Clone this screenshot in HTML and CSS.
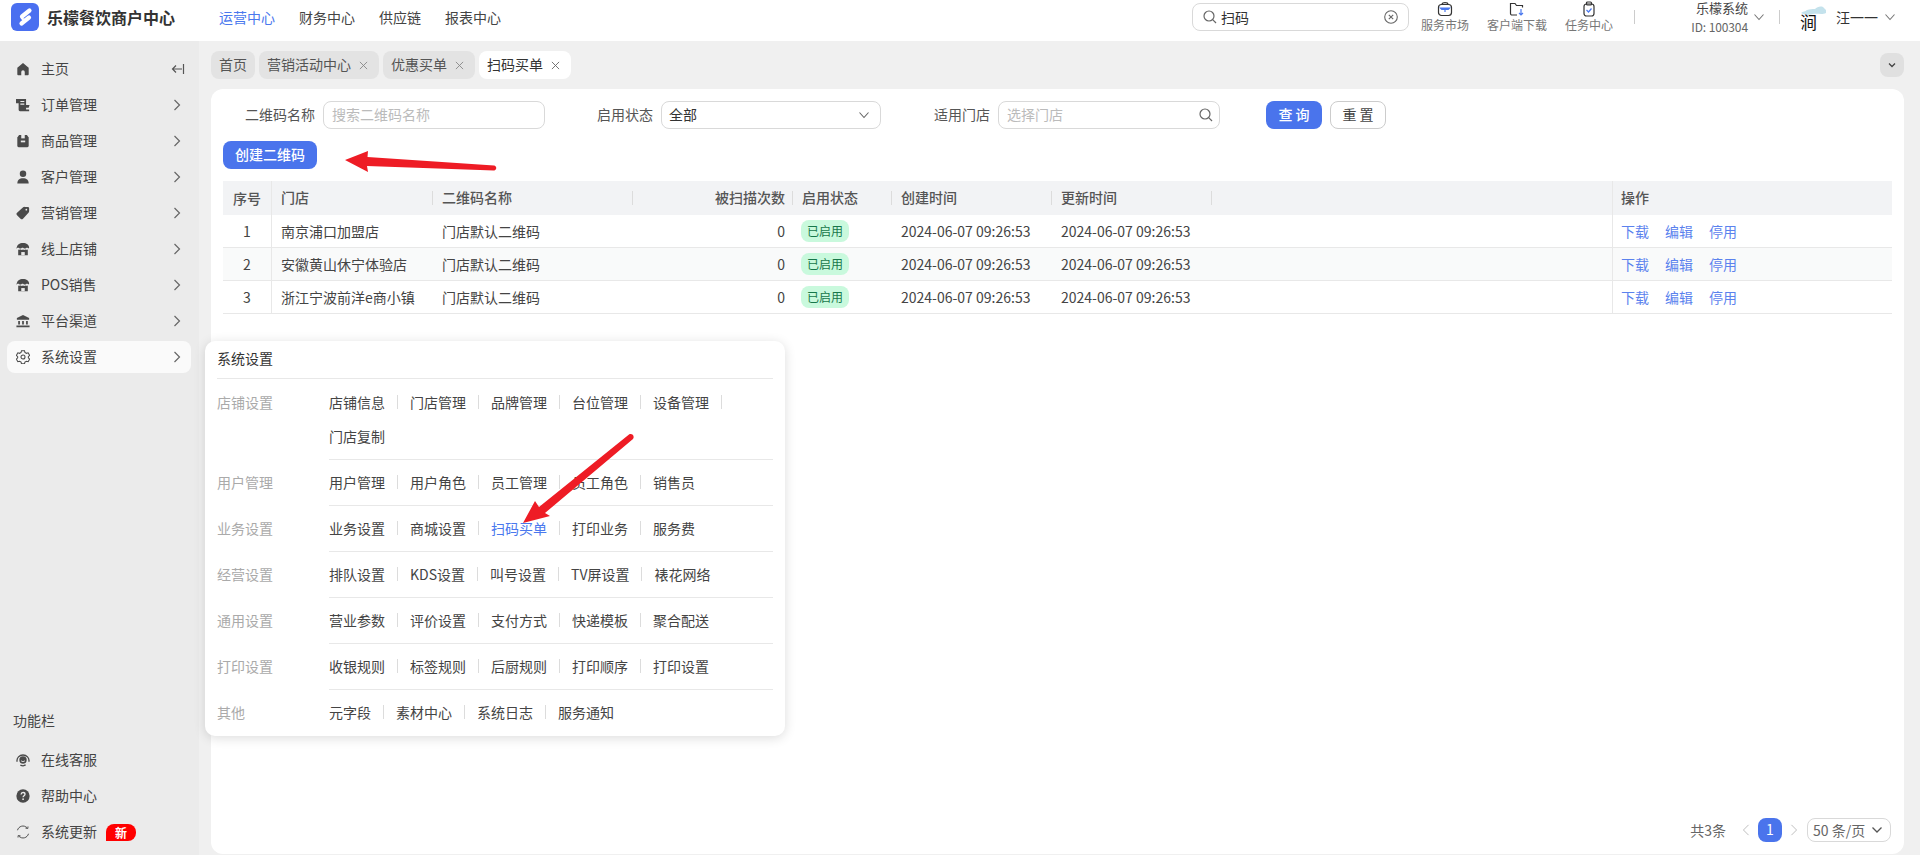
FILE: index.html
```html
<!DOCTYPE html>
<html lang="zh">
<head>
<meta charset="utf-8">
<title>乐檬餐饮商户中心</title>
<link rel="stylesheet" href="styles.css">
</head>
<body>
<header class="topbar">
  <div class="brand">
    <svg class="logo" viewBox="0 0 28 28"><rect width="28" height="28" rx="6" fill="#4a6ff0"/><path d="M18.500 7.500 11 13.500" fill="none" stroke="#fff" stroke-width="4.200" stroke-linecap="round"/><path d="M18 14.500 10.500 20.500" fill="none" stroke="#fff" stroke-width="4.200" stroke-linecap="round"/><path d="M11 13.500c-1.500 1.500.5 3 2.500 3" fill="none" stroke="#fff" stroke-width="2"/></svg>
    <span class="brand-name">乐檬餐饮商户中心</span>
  </div>
  <nav class="topnav">
    <a class="topnav-item is-active">运营中心</a>
    <a class="topnav-item">财务中心</a>
    <a class="topnav-item">供应链</a>
    <a class="topnav-item">报表中心</a>
  </nav>
  <div class="top-right">
    <div class="search">
      <svg class="ico16" viewBox="0 0 16 16" fill="none" stroke="#666" stroke-width="1.200"><circle cx="7" cy="7" r="5"/><path d="m10.700 10.700 3.300 3.300"/></svg>
      <span class="search-text">扫码</span>
      <svg class="ico16" viewBox="0 0 16 16" fill="none" stroke="#666" stroke-width="1.100"><circle cx="8" cy="8" r="6.300"/><path d="m5.800 5.800 4.400 4.400m0-4.400-4.400 4.400"/></svg>
    </div>
    <div class="tool tool-a">
      <svg class="tool-ico" viewBox="0 0 16 16" fill="none" stroke="#333" stroke-width="1.200"><rect x="1.500" y="3.500" width="13" height="11" rx="3"/><path d="M5 3.500c0-2.500 6-2.500 6 0"/><path d="M2 6.500h12L11.500 9h-7z" fill="#4a78ee" stroke="none"/><path d="M8 9v2" stroke="#4a78ee"/></svg>
      <span>服务市场</span>
    </div>
    <div class="tool tool-b">
      <svg class="tool-ico" viewBox="0 0 16 16" fill="none" stroke="#333" stroke-width="1.200"><path d="M13.500 6.500V4.500h-6L6 2.500H1.500v10a1.500 1.500 0 0 0 1.500 1.500h5"/><path d="M12 8v6m-2-2 2 2 2-2" stroke="#4a78ee"/></svg>
      <span>客户端下载</span>
    </div>
    <div class="tool tool-c">
      <svg class="tool-ico" viewBox="0 0 16 16" fill="none" stroke="#333" stroke-width="1.200"><rect x="3" y="3" width="10" height="12" rx="2.500"/><rect x="5.500" y="1" width="5" height="3" rx="1"/><path d="m5.500 9 2 2 3-3.500" stroke="#4a78ee"/></svg>
      <span>任务中心</span>
    </div>
    <i class="vsep vsep-a"></i>
    <div class="org">
      <span class="org-name">乐檬系统</span>
      <span class="org-id">ID: 100304</span>
    </div>
    <svg class="chev-down org-chev" viewBox="0 0 12 12" fill="none" stroke="#777" stroke-width="1.100"><path d="m1.500 3.500 4.500 5 4.500-5"/></svg>
    <i class="vsep vsep-b"></i>
    <div class="avatar">
      <svg class="avatar-cloud" viewBox="0 0 32 32"><path d="M5 12c2-2 4-1 6-3 3-1 5-1 8-1 2-2 5-3 8-2l3 3v3c-4 2-9 0-13 1-4 1-8 1-12-1Z" fill="#c4e2ec"/></svg>
      <span class="avatar-char">涧</span>
    </div>
    <span class="user-name">汪一一</span>
    <svg class="chev-down user-chev" viewBox="0 0 12 12" fill="none" stroke="#777" stroke-width="1.100"><path d="m1.500 3.500 4.500 5 4.500-5"/></svg>
  </div>
</header>

<div class="main">
  <aside class="sidebar">
    <ul class="menu">
      <li class="menu-item">
        <svg class="menu-ico" viewBox="0 0 16 16"><path d="M8 1 1.500 6.500V14a1 1 0 0 0 1 1H6v-3.500a2 2 0 0 1 4 0V15h3.500a1 1 0 0 0 1-1V6.500Z" fill="#4a4a4a"/></svg>
        <span class="menu-text">主页</span>
        <svg class="collapse" viewBox="0 0 14 14" fill="none" stroke="#555" stroke-width="1.200"><path d="M11 7H1.500m3.500-3.500L1.500 7 5 10.500M12.500 2v10"/></svg>
      </li>
      <li class="menu-item">
        <svg class="menu-ico" viewBox="0 0 16 16"><path d="M0 1h11.500v7H15.500l-1 3H11.500v2l3.500 0v2H4.500A1.500 1.500 0 0 1 3 13.500V6H0Z" fill="#4a4a4a"/><path d="M5 4h4.500M5 7h4.500" stroke="#ebebeb" stroke-width="1.300"/></svg>
        <span class="menu-text">订单管理</span>
        <svg class="chev" viewBox="0 0 8 12" fill="none" stroke="#666" stroke-width="1.200"><path d="m1.500 1 5 5-5 5"/></svg>
      </li>
      <li class="menu-item">
        <svg class="menu-ico" viewBox="0 0 16 16"><path d="M1.500 4 3.500 1h9l2 3v9.500a1.500 1.500 0 0 1-1.500 1.500H3a1.500 1.500 0 0 1-1.500-1.500Z" fill="#4a4a4a"/><path d="M5.500 7.500h5v2h-5Z" fill="#ebebeb"/><path d="M6 1v4h4V1" fill="#ebebeb"/></svg>
        <span class="menu-text">商品管理</span>
        <svg class="chev" viewBox="0 0 8 12" fill="none" stroke="#666" stroke-width="1.200"><path d="m1.500 1 5 5-5 5"/></svg>
      </li>
      <li class="menu-item">
        <svg class="menu-ico" viewBox="0 0 16 16"><circle cx="8" cy="4.200" r="3.700" fill="#4a4a4a"/><path d="M1.500 15.500c0-4 2.500-6 6.500-6s6.500 2 6.500 6Z" fill="#4a4a4a"/></svg>
        <span class="menu-text">客户管理</span>
        <svg class="chev" viewBox="0 0 8 12" fill="none" stroke="#666" stroke-width="1.200"><path d="m1.500 1 5 5-5 5"/></svg>
      </li>
      <li class="menu-item">
        <svg class="menu-ico" viewBox="0 0 16 16"><path d="M10 1h3.500A1.500 1.500 0 0 1 15 2.500V6a3 3 0 0 1-1 2l-6 6.500a2 2 0 0 1-2.800 0l-4-4a2 2 0 0 1 0-2.800L7.500 2a3.500 3.500 0 0 1 2.500-1Z" fill="#4a4a4a"/><circle cx="11.800" cy="4.200" r="1" fill="#ebebeb"/></svg>
        <span class="menu-text">营销管理</span>
        <svg class="chev" viewBox="0 0 8 12" fill="none" stroke="#666" stroke-width="1.200"><path d="m1.500 1 5 5-5 5"/></svg>
      </li>
      <li class="menu-item">
        <svg class="menu-ico" viewBox="0 0 16 16"><path d="M1 6.500C1 3 4 1 8 1s7 2 7 5.500c0 .5-.4.800-1 .5-1-.6-1.800-.6-2.700 0-1 .6-1.500.5-2.500 0s-1.700-.5-2.700 0-1.500.6-2.300 0c-1-.6-2-.6-2.800 0-.6.300-1 0-1-.5Z" fill="#4a4a4a"/><path d="M2.500 8.500c1 .5 2.500 0 2.800 0 1 .8 2 .6 2.700 0 1 .8 2 .6 2.700 0 .6.300 1.800.5 2.800 0V15H2.500Z" fill="#4a4a4a"/><path d="M6 15v-3.500h4V15Z" fill="#ebebeb"/></svg>
        <span class="menu-text">线上店铺</span>
        <svg class="chev" viewBox="0 0 8 12" fill="none" stroke="#666" stroke-width="1.200"><path d="m1.500 1 5 5-5 5"/></svg>
      </li>
      <li class="menu-item">
        <svg class="menu-ico" viewBox="0 0 16 16"><path d="M1 6.500C1 3 4 1 8 1s7 2 7 5.500c0 .5-.4.800-1 .5-1-.6-1.800-.6-2.700 0-1 .6-1.500.5-2.500 0s-1.700-.5-2.700 0-1.500.6-2.300 0c-1-.6-2-.6-2.800 0-.6.300-1 0-1-.5Z" fill="#4a4a4a"/><path d="M2.500 8.500c1 .5 2.500 0 2.800 0 1 .8 2 .6 2.700 0 1 .8 2 .6 2.700 0 .6.300 1.800.5 2.800 0V15H2.500Z" fill="#4a4a4a"/><path d="M6 15v-3.500h4V15Z" fill="#ebebeb"/></svg>
        <span class="menu-text">POS销售</span>
        <svg class="chev" viewBox="0 0 8 12" fill="none" stroke="#666" stroke-width="1.200"><path d="m1.500 1 5 5-5 5"/></svg>
      </li>
      <li class="menu-item">
        <svg class="menu-ico" viewBox="0 0 16 16"><path d="M8 1 1 4.500v2h14v-2Z" fill="#4a4a4a"/><path d="M2.500 8h2v4h-2ZM7 8h2v4H7ZM11.500 8h2v4h-2ZM.5 13h15v2H.5Z" fill="#4a4a4a"/></svg>
        <span class="menu-text">平台渠道</span>
        <svg class="chev" viewBox="0 0 8 12" fill="none" stroke="#666" stroke-width="1.200"><path d="m1.500 1 5 5-5 5"/></svg>
      </li>
      <li class="menu-item is-open">
        <svg class="menu-ico" viewBox="0 0 16 16" fill="none" stroke="#4a4a4a" stroke-width="1.200"><path d="M6.300 1h3.400l.5 2 1.700 1 2-.6 1.700 3-1.500 1.400v1.400l1.500 1.400-1.700 3-2-.6-1.700 1-.5 2H6.300l-.5-2-1.700-1-2 .6-1.700-3 1.500-1.400V7.800L.4 6.400l1.700-3 2 .6 1.700-1Z" transform="translate(0 -.2)"/><circle cx="8" cy="8" r="2.300"/></svg>
        <span class="menu-text">系统设置</span>
        <svg class="chev" viewBox="0 0 8 12" fill="none" stroke="#666" stroke-width="1.200"><path d="m1.500 1 5 5-5 5"/></svg>
      </li>
    </ul>
    <div class="side-foot">
      <div class="foot-title">功能栏</div>
      <div class="menu-item">
        <svg class="menu-ico" viewBox="0 0 16 16" fill="none" stroke="#4a4a4a"><circle cx="8" cy="8" r="4.200" fill="#4a4a4a" stroke="none"/><path d="M5.800 8.800c1 1.300 3.400 1.300 4.400 0" stroke="#ebebeb" stroke-width="1"/><path d="M1.200 10C.5 5.500 4 2.300 8 2.300s7.500 3.200 6.800 7.700M5 13.800c2 1 4.500 1 6-.3" stroke-width="1.500"/></svg>
        <span class="menu-text">在线客服</span>
      </div>
      <div class="menu-item">
        <svg class="menu-ico" viewBox="0 0 16 16"><circle cx="8" cy="8" r="7.600" fill="#4a4a4a"/><path d="M5.800 6.200C5.900 4.800 6.800 4 8.100 4c1.300 0 2.200.8 2.200 2 0 1.800-2.200 1.800-2.200 3.500" fill="none" stroke="#ebebeb" stroke-width="1.500"/><circle cx="8.100" cy="11.600" r="1" fill="#ebebeb"/></svg>
        <span class="menu-text">帮助中心</span>
      </div>
      <div class="menu-item">
        <svg class="menu-ico" viewBox="0 0 16 16" fill="none" stroke="#4a4a4a" stroke-width="1.100"><path d="M1.700 6A6.500 6.500 0 0 1 12.500 3M14.300 10A6.500 6.500 0 0 1 3.500 13"/><path d="m10.800 3.500 2.700.5.200-2.300M5.200 12.500l-2.700-.5-.2 2.300"/></svg>
        <span class="menu-text">系统更新</span>
        <span class="badge-new">新</span>
      </div>
    </div>
  </aside>

  <section class="content">
    <div class="tabs">
      <div class="tab"><span>首页</span></div>
      <div class="tab"><span>营销活动中心</span><svg class="tab-x" viewBox="0 0 10 10" fill="none" stroke="#888" stroke-width="1"><path d="m1 1 8 8m0-8-8 8"/></svg></div>
      <div class="tab"><span>优惠买单</span><svg class="tab-x" viewBox="0 0 10 10" fill="none" stroke="#888" stroke-width="1"><path d="m1 1 8 8m0-8-8 8"/></svg></div>
      <div class="tab is-current"><span>扫码买单</span><svg class="tab-x" viewBox="0 0 10 10" fill="none" stroke="#666" stroke-width="1"><path d="m1 1 8 8m0-8-8 8"/></svg></div>
      <div class="tab-more"><svg viewBox="0 0 10 10" fill="none" stroke="#444" stroke-width="1.300"><path d="m2 3.500 3 3 3-3"/></svg></div>
    </div>

    <div class="card">
      <form class="filters">
        <label class="f-label f-l1">二维码名称</label>
        <div class="field f-w1"><span class="ph">搜索二维码名称</span></div>
        <label class="f-label f-l2">启用状态</label>
        <div class="field f-w2"><span class="val">全部</span><svg class="field-chev" viewBox="0 0 12 12" fill="none" stroke="#666" stroke-width="1.100"><path d="m1.500 3.500 4.500 5 4.500-5"/></svg></div>
        <label class="f-label f-l3">适用门店</label>
        <div class="field f-w3"><span class="ph">选择门店</span><svg class="ico16 field-search" viewBox="0 0 16 16" fill="none" stroke="#666" stroke-width="1.200"><circle cx="7" cy="7" r="5"/><path d="m10.700 10.700 3.300 3.300"/></svg></div>
        <button type="button" class="btn btn-primary btn-query">查 询</button>
        <button type="button" class="btn btn-plain">重 置</button>
      </form>

      <button type="button" class="btn btn-primary btn-create">创建二维码</button>

      <table class="grid">
        <colgroup>
          <col class="c1"><col class="c2"><col class="c3"><col class="c4"><col class="c5"><col class="c6"><col class="c7"><col class="c8"><col class="c9">
        </colgroup>
        <thead>
          <tr>
            <th class="center">序号</th><th class="sep">门店</th><th class="sep">二维码名称</th><th class="right sep">被扫描次数</th><th class="sep">启用状态</th><th class="sep">创建时间</th><th class="sep">更新时间</th><th></th><th class="ops">操作</th>
          </tr>
        </thead>
        <tbody>
          <tr>
            <td class="center bar">1</td><td>南京浦口加盟店</td><td>门店默认二维码</td><td class="right">0</td><td><span class="tag">已启用</span></td><td>2024-06-07 09:26:53</td><td>2024-06-07 09:26:53</td><td></td><td class="ops"><a>下载</a><a>编辑</a><a>停用</a></td>
          </tr>
          <tr class="alt">
            <td class="center bar">2</td><td>安徽黄山休宁体验店</td><td>门店默认二维码</td><td class="right">0</td><td><span class="tag">已启用</span></td><td>2024-06-07 09:26:53</td><td>2024-06-07 09:26:53</td><td></td><td class="ops"><a>下载</a><a>编辑</a><a>停用</a></td>
          </tr>
          <tr>
            <td class="center bar">3</td><td>浙江宁波前洋e商小镇</td><td>门店默认二维码</td><td class="right">0</td><td><span class="tag">已启用</span></td><td>2024-06-07 09:26:53</td><td>2024-06-07 09:26:53</td><td></td><td class="ops"><a>下载</a><a>编辑</a><a>停用</a></td>
          </tr>
        </tbody>
      </table>

      <div class="pager">
        <span class="pager-total">共3条</span>
        <svg class="pager-arrow" viewBox="0 0 8 14" fill="none" stroke="#bbb" stroke-width="1.100"><path d="M7 1 1 7l6 6"/></svg>
        <span class="pager-num">1</span>
        <svg class="pager-arrow" viewBox="0 0 8 14" fill="none" stroke="#bbb" stroke-width="1.100"><path d="m1 1 6 6-6 6"/></svg>
        <div class="pager-size">50 条/页<svg class="pager-chev" viewBox="0 0 12 12" fill="none" stroke="#555" stroke-width="1.300"><path d="m1.500 3.500 4.500 4.500 4.500-4.500"/></svg></div>
      </div>
    </div>
  </section>
</div>

<div class="flyout">
  <div class="fly-title">系统设置</div>
  <div class="fly-group">
    <div class="fly-label">店铺设置</div>
    <div class="fly-links"><a>店铺信息</a><a>门店管理</a><a>品牌管理</a><a>台位管理</a><a>设备管理</a><a class="last">门店复制</a></div>
  </div>
  <div class="fly-group">
    <div class="fly-label">用户管理</div>
    <div class="fly-links"><a>用户管理</a><a>用户角色</a><a>员工管理</a><a>员工角色</a><a class="last">销售员</a></div>
  </div>
  <div class="fly-group">
    <div class="fly-label">业务设置</div>
    <div class="fly-links"><a>业务设置</a><a>商城设置</a><a class="is-on">扫码买单</a><a>打印业务</a><a class="last">服务费</a></div>
  </div>
  <div class="fly-group">
    <div class="fly-label">经营设置</div>
    <div class="fly-links"><a>排队设置</a><a>KDS设置</a><a>叫号设置</a><a>TV屏设置</a><a class="last">裱花网络</a></div>
  </div>
  <div class="fly-group">
    <div class="fly-label">通用设置</div>
    <div class="fly-links"><a>营业参数</a><a>评价设置</a><a>支付方式</a><a>快递模板</a><a class="last">聚合配送</a></div>
  </div>
  <div class="fly-group">
    <div class="fly-label">打印设置</div>
    <div class="fly-links"><a>收银规则</a><a>标签规则</a><a>后厨规则</a><a>打印顺序</a><a class="last">打印设置</a></div>
  </div>
  <div class="fly-group no-line">
    <div class="fly-label">其他</div>
    <div class="fly-links"><a>元字段</a><a>素材中心</a><a>系统日志</a><a class="last">服务通知</a></div>
  </div>
</div>

<svg class="annot" viewBox="0 0 1920 855">
  <path d="M345 160 368 151 367.500 157 494 165.500C497 166 497 170 494 170.500L367 166 368 172Z" fill="#ee1c25"/>
  <path d="M523 523 535 501 539 507 629 434.500C632 433 635 436 633 439L545 513 550 516Z" fill="#ee1c25"/>
</svg>
</body>
</html>
```
FILE: styles.css
```css
* { box-sizing: border-box; }
html, body { margin: 0; padding: 0; height: 100%; }
body {
  width: 1920px; height: 855px; overflow: hidden; position: relative;
  font-family: "Noto Sans CJK SC", "Noto Sans", sans-serif;
  font-size: 14px; color: #444; background: #f0f0f0;
  display: flex; flex-direction: column;
}
a { text-decoration: none; }
svg { display: block; flex: none; }

.topbar { height: 41px; flex: none; background: #fff; display: flex; align-items: center; padding: 0 0 7px 11px; }
.brand { display: flex; align-items: center; width: 208px; }
.logo { width: 28px; height: 28px; margin-right: 8px; }
.brand-name { font-size: 16px; font-weight: 700; color: #333; white-space: nowrap; }
.topnav { display: flex; gap: 24px; }
.topnav-item { font-size: 14px; color: #444; line-height: 20px; }
.topnav-item.is-active { color: #4a78ee; }
.top-right { margin-left: auto; display: flex; align-items: center; padding-right: 24px; }
.search { width: 217px; height: 28px; border: 1px solid #d9d9d9; border-radius: 8px; display: flex; align-items: center; padding: 0 9px; gap: 3px; }
.search-text { flex: 1; font-size: 14px; color: #333; }
.ico16 { width: 16px; height: 16px; }
.tool { display: flex; flex-direction: column; align-items: center; font-size: 12px; line-height: 16px; color: #777; white-space: nowrap; }
.tool-ico { width: 16px; height: 16px; }
.tool-a { margin-left: 12px; }
.tool-b { margin-left: 18px; }
.tool-c { margin-left: 18px; }
.vsep { display: block; width: 1px; height: 14px; background: #ccc; }
.vsep-a { margin-left: 21px; }
.org { width: 113px; display: flex; flex-direction: column; align-items: flex-end; }
.org-name { display: block; font-size: 13px; line-height: 18px; color: #444; }
.org-id { display: block; font-size: 12px; line-height: 18px; color: #666; margin-top: 1px; letter-spacing: -.1px; }
.chev-down { width: 12px; height: 12px; }
.org-chev { margin-left: 5px; }
.vsep-b { margin-left: 14px; }
.avatar { position: relative; width: 32px; height: 32px; margin-left: 16px; border-radius: 50%; background: #fff; overflow: hidden; text-align: center; }
.avatar-cloud { position: absolute; inset: 0; width: 32px; height: 32px; }
.avatar-char { position: relative; display: block; font-size: 17px; font-weight: 400; line-height: 32px; color: #111; padding: 5px 7px 0 0; }
.user-name { margin-left: 8px; font-size: 14px; color: #333; }
.user-chev { margin-left: 6px; }

.main { flex: 1; display: flex; min-height: 0; }

.sidebar { width: 199px; flex: none; background: #ebebeb; padding: 12px 8px 7px 7px; display: flex; flex-direction: column; justify-content: space-between; }
.menu { list-style: none; margin: 0; padding: 0; display: flex; flex-direction: column; gap: 4px; }
.menu-item { height: 32px; border-radius: 8px; display: flex; align-items: center; padding-left: 9px; color: #444; font-size: 14px; }
.menu-item.is-open { background: #fafafa; }
.menu-ico { width: 14px; height: 14px; }
.menu-text { margin-left: 11px; margin-bottom: 2px; flex: none; }
.chev { width: 8px; height: 12px; margin-left: auto; margin-right: 10px; }
.collapse { width: 14px; height: 14px; margin-left: auto; margin-right: 6px; }
.side-foot { display: flex; flex-direction: column; gap: 4px; }
.foot-title { padding-left: 6px; line-height: 20px; margin-bottom: 10px; color: #444; }
.badge-new { margin-left: 9px; width: 30px; height: 17px; background: #f00; color: #fff; font-size: 12px; line-height: 17px; text-align: center; font-weight: 700; border-radius: 8px 8px 8px 0; }

.content { flex: 1; min-width: 0; padding: 10px 16px 1px 12px; display: flex; flex-direction: column; }
.tabs { height: 28px; flex: none; margin-bottom: 10px; display: flex; align-items: center; gap: 4px; }
.tab { height: 28px; padding: 0 8px; background: #e3e3e3; border-radius: 8px; display: flex; align-items: center; gap: 8px; font-size: 14px; color: #555; white-space: nowrap; }
.tab span { margin-bottom: 2px; }
.tab.is-current { background: #fff; color: #333; }
.tab-x { width: 9px; height: 9px; margin-right: 3px; }
.tab-more { margin-left: auto; width: 24px; height: 24px; background: #e0e0e0; border-radius: 8px; display: flex; align-items: center; justify-content: center; }
.tab-more svg { width: 10px; height: 10px; }

.card { flex: 1; position: relative; background: #fff; border-radius: 12px; padding: 12px 12px 0; display: flex; flex-direction: column; }
.filters { height: 28px; flex: none; display: flex; align-items: center; }
.f-label { color: #555; font-size: 14px; white-space: nowrap; text-align: right; padding-bottom: 2px; }
.f-l1 { width: 92px; margin-right: 8px; }
.f-l2 { width: 57px; margin-left: 51px; margin-right: 8px; }
.f-l3 { width: 57px; margin-left: 52px; margin-right: 8px; }
.field { height: 28px; border: 1px solid #d9d9d9; border-radius: 8px; display: flex; align-items: center; justify-content: space-between; padding: 0 7px; }
.f-w1 { width: 222px; }
.f-w2 { width: 220px; }
.f-w3 { width: 222px; }
.ph { color: #bbb; font-size: 14px; margin-bottom: 2px; margin-left: 1px; }
.val { color: #333; font-size: 14px; margin-bottom: 2px; }
.field-chev { width: 12px; height: 12px; margin-right: 3px; }
.field-search { margin-right: -2px; }
.btn { font-family: inherit; font-size: 14px; border-radius: 8px; height: 28px; padding: 0 0 2px; cursor: pointer; }
.btn-primary { background: #4a74ec; color: #fff; border: 0; font-weight: 500; }
.btn-plain { background: #fff; border: 1px solid #ccc; color: #444; width: 56px; margin-left: 8px; }
.btn-query { width: 56px; margin-left: 46px; }
.btn-create { width: 94px; margin-top: 12px; flex: none; }

.grid { width: 1669px; table-layout: fixed; border-collapse: separate; border-spacing: 0; margin-top: 12px; flex: none; }
.c1 { width: 49px; } .c2 { width: 161px; } .c3 { width: 200px; } .c4 { width: 160px; } .c5 { width: 99px; }
.c6 { width: 160px; } .c7 { width: 160px; } .c8 { width: 400px; } .c9 { width: 280px; }
.grid th { position: relative; height: 34px; background: #f2f3f5; font-weight: 500; font-size: 14px; color: #555; text-align: left; padding: 0 8px 2px 9px; white-space: nowrap; }
.grid th.center { border-right: 1px solid #e8e8e8; }
.grid th.sep::before { content: ""; position: absolute; right: 0; top: 10px; width: 1px; height: 14px; background: #dcdcdc; }
.grid td { height: 33px; padding: 0 8px 1px 9px; color: #444; font-size: 14px; border-bottom: 1px solid #e8e8e8; white-space: nowrap; }
.grid .center { text-align: center; padding: 0 0 1px; }
.grid .right { text-align: right; }
.grid .bar { border-right: 1px solid #e8e8e8; }
.grid .ops { border-left: 1px solid #e8e8e8; padding-left: 8px; }
.alt td { background: #f9fafa; }
.tag { display: inline-block; width: 48px; height: 22px; line-height: 21px; margin-left: -1px; text-align: center; background: #c9f9dd; color: #17774a; border-radius: 8px; font-size: 12px; vertical-align: middle; }
.ops a { color: #5b82ee; margin-right: 16px; }

.pager { margin-top: auto; height: 24px; margin-bottom: 12px; flex: none; display: flex; align-items: center; justify-content: flex-end; color: #666; font-size: 14px; }
.pager-arrow { width: 8px; height: 12px; margin: 0 8px; }
.pager-total { margin-right: 8px; }
.pager-num { width: 24px; height: 24px; background: #4a74ec; color: #fff; border-radius: 8px; text-align: center; line-height: 23px; }
.pager-size { width: 84px; height: 24px; margin-left: 1px; margin-right: 1px; border: 1px solid #d9d9d9; border-radius: 8px; display: flex; align-items: center; justify-content: space-between; padding: 0 7px 0 5px; white-space: nowrap; }
.pager-chev { width: 12px; height: 12px; }

.flyout { position: absolute; left: 205px; top: 341px; width: 580px; height: 395px; background: #fff; border-radius: 10px; box-shadow: 0 2px 12px rgba(0,0,0,.14); padding: 0 12px; }
.fly-title { height: 38px; line-height: 35px; border-bottom: 1px solid #e8e8e8; font-size: 14px; font-weight: 400; color: #333; }
.fly-group { display: flex; position: relative; padding: 6px 0; }
.fly-group:not(.no-line)::after { content: ""; position: absolute; left: 112px; right: 0; bottom: -1px; height: 1px; background: #e8e8e8; }
.fly-label { width: 112px; flex: none; line-height: 34px; color: #aaa; font-size: 14px; }
.fly-links { flex: 1; display: flex; flex-wrap: wrap; }
.fly-links a { position: relative; color: #444; font-size: 14px; line-height: 34px; padding-right: 13px; margin-right: 12px; white-space: nowrap; }
.fly-links a::after { content: ""; position: absolute; right: 0; top: 10px; height: 14px; width: 1px; background: #dcdcdc; }
.fly-links a.last::after { display: none; }
.fly-links a.is-on { color: #4a78ee; }

.annot { position: absolute; left: 0; top: 0; width: 1920px; height: 855px; pointer-events: none; }
```
